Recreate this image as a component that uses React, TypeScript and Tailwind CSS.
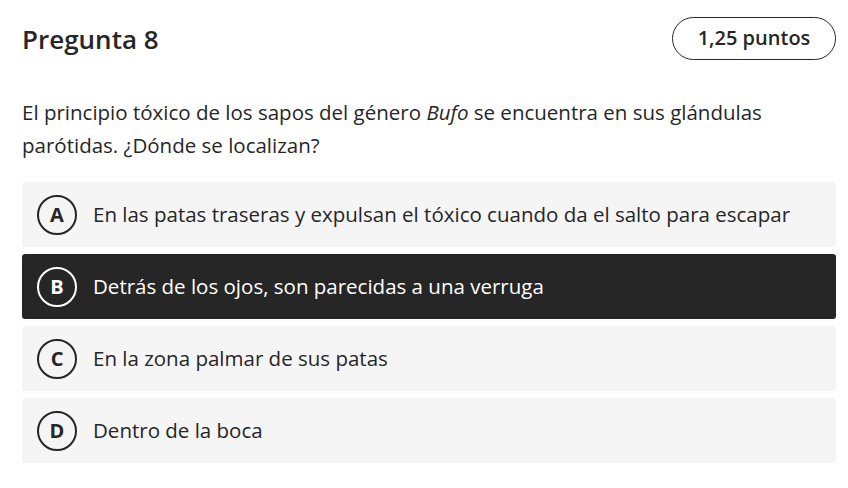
import React from "react";

const options = [
  { l: "A", t: "En las patas traseras y expulsan el tóxico cuando da el salto para escapar", sel: false },
  { l: "B", t: "Detrás de los ojos, son parecidas a una verruga", sel: true },
  { l: "C", t: "En la zona palmar de sus patas", sel: false },
  { l: "D", t: "Dentro de la boca", sel: false },
];

export default function App() {
  return (
    <div
      className="w-[848px] h-[488px] bg-white pl-[22px] pr-[12px] text-[#262626]"
      style={{ fontFamily: '"Open Sans", sans-serif' }}
    >
      <div className="flex items-center justify-between pt-4 h-[60px]">
        <h2 className="text-[26px] font-semibold leading-none mt-[2px]">Pregunta 8</h2>
        <div className="h-[43px] w-[164px] rounded-full border-[1.5px] border-[#262626] flex items-center justify-center text-[20px] font-semibold">
          1,25 puntos
        </div>
      </div>
      <p className="mt-[36px] text-[20.5px] leading-[33px] pr-[60px]">
        El principio tóxico de los sapos del género <i>Bufo</i> se encuentra en sus glándulas parótidas. ¿Dónde se localizan?
      </p>
      <div className="mt-[20px] flex flex-col gap-[7px]">
        {options.map((o) => (
          <div
            key={o.l}
            className={
              "h-[65px] rounded-[3px] flex items-center pl-[15px] gap-[16px] " +
              (o.sel ? "bg-[#262626] text-white" : "bg-[#f5f5f5] text-[#262626]")
            }
          >
            <div
              className={
                "w-[40px] h-[40px] rounded-full border-2 flex items-center justify-center text-[20px] font-bold shrink-0 " +
                (o.sel ? "border-white" : "border-[#262626]")
              }
            >
              {o.l}
            </div>
            <span className="text-[20.5px]">{o.t}</span>
          </div>
        ))}
      </div>
    </div>
  );
}
